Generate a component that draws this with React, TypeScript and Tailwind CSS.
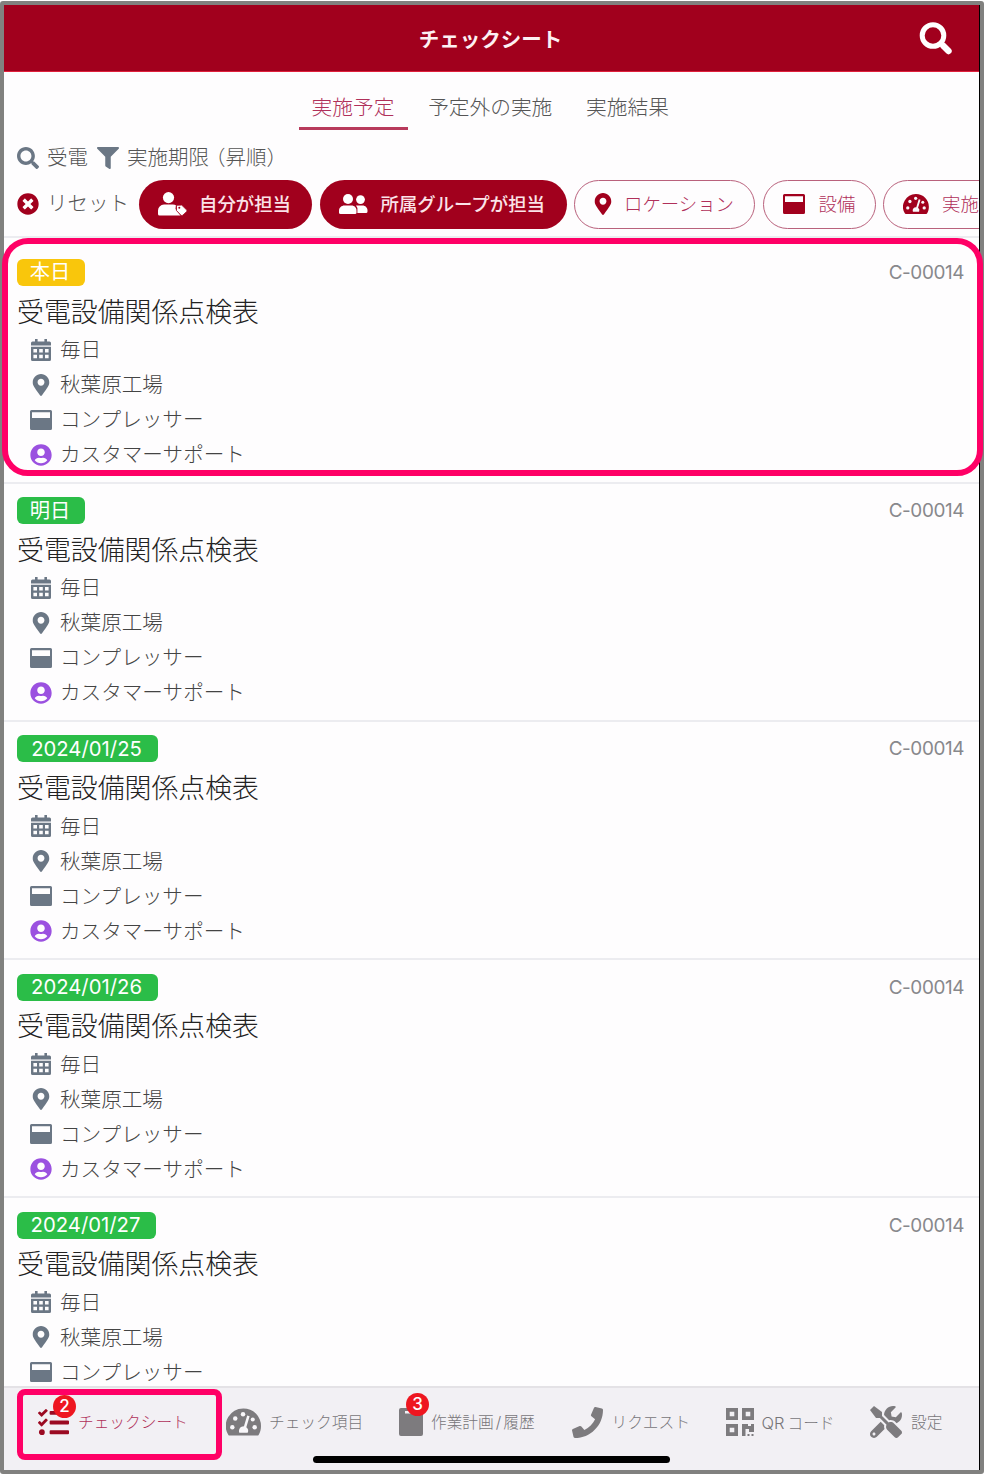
import type { ReactNode } from "react";
import {
  FaFilter,
  FaMapMarkerAlt,
  FaPhone,
  FaSearch,
  FaTasks,
  FaTimesCircle,
  FaTools,
  FaUserCircle,
} from "react-icons/fa";

const sheets = [
  { id: 1, due: "本日", badge: "w-[68px] bg-[#f9c60c]" },
  { id: 2, due: "明日", badge: "w-[68px] bg-[#2bbd48]" },
  { id: 3, due: "2024/01/25", badge: "w-[141px] bg-[#2bbd48]" },
  { id: 4, due: "2024/01/26", badge: "w-[141px] bg-[#2bbd48]" },
  { id: 5, due: "2024/01/27", badge: "w-[139px] bg-[#2bbd48]" },
];

function HeaderSearchIcon({ className }: { className: string }) {
  return (
    <svg viewBox="0 0 34 34" className={className} fill="none" stroke="currentColor">
      <circle cx="14" cy="13.5" r="10.8" strokeWidth="5" />
      <path d="M21 21l3 3" strokeWidth="4" />
      <path d="M24.5 24l5 5" strokeWidth="6.4" strokeLinecap="round" />
    </svg>
  );
}

function EquipmentIcon({ className }: { className: string }) {
  return (
    <svg viewBox="0 0 22 20" className={className} fill="currentColor">
      <path
        fillRule="evenodd"
        d="M1.5 0h19A1.5 1.5 0 0 1 22 1.5v17a1.5 1.5 0 0 1-1.5 1.5h-19A1.5 1.5 0 0 1 0 18.5v-17A1.5 1.5 0 0 1 1.5 0zM2 2.3v5.7h18v-5.7z"
      />
    </svg>
  );
}

function CalendarIcon() {
  return (
    <svg viewBox="0 0 20 22" className="h-[22px] w-[20px] text-[#6b7785]" fill="currentColor">
      <path d="M4 0h2.6v2.5h6.8V0H16v2.5h2.5A1.5 1.5 0 0 1 20 4v2.5H0V4a1.5 1.5 0 0 1 1.5-1.5H4z" />
      <path
        fillRule="evenodd"
        d="M0 7.8h20v12.7a1.5 1.5 0 0 1-1.5 1.5h-17A1.5 1.5 0 0 1 0 20.5zM2.4 10v3.5h3.6V10zm5.8 0v3.5h3.6V10zm5.8 0v3.5h3.6V10zM2.4 15.7v3.5h3.6v-3.5zm5.8 0v3.5h3.6v-3.5zm5.8 0v3.5h3.6v-3.5z"
      />
    </svg>
  );
}

function GaugeIcon({ className }: { className: string }) {
  return (
    <svg viewBox="0 0 36 28" className={className}>
      <path
        fill="currentColor"
        d="M18 0a18 18 0 0 1 18 18c0 3.4-.8 6.4-2.3 9.1-.3.6-.9.9-1.5.9H3.800c-.6 0-1.200-.3-1.500-.9A18 18 0 0 1 18 0z"
      />
      <g className="fill-[#f9f7fa]">
        <circle cx="6.5" cy="19.5" r="2.3" />
        <circle cx="9.5" cy="10.5" r="2.3" />
        <circle cx="17.5" cy="6" r="2.3" />
        <circle cx="29.5" cy="19.5" r="2.3" />
        <circle cx="27.5" cy="11.5" r="2.1" />
        <path d="M21.8 7.2l2.5.8-3.4 11.3a4.700 4.700 0 0 1 1.400 5.700h-8.600a4.700 4.700 0 0 1 4.700-6.500z" />
      </g>
    </svg>
  );
}

function UserTagIcon() {
  return (
    <svg viewBox="0 0 29 24" className="h-[24px] w-[29px] shrink-0 text-white" fill="currentColor">
      <circle cx="10.5" cy="5.6" r="5.6" />
      <path d="M6 12.5h9c1.2 0 2.1.3 2.9.8l-.4 3.700 5 6.500H1.500A1.500 1.500 0 0 1 0 22v-3a6.300 6.300 0 0 1 6-6.500z" />
      <path
        className="stroke-[#a1001d]"
        strokeWidth="0.8"
        d="M18.500 13.300l5.200-.2 4.800 4.700c.6.600.6 1.300 0 1.900l-3.700 3.500c-.6.500-1.300.5-1.900 0l-4.400-4.600z"
      />
      <circle cx="21.3" cy="15.8" r="1" className="fill-[#a1001d]" />
    </svg>
  );
}

function UserGroupIcon() {
  return (
    <svg viewBox="0 0 29 20" className="h-[20px] w-[29px] shrink-0 text-white" fill="currentColor">
      <circle cx="9" cy="5" r="5" />
      <circle cx="21.5" cy="5.6" r="4.4" />
      <path d="M5.5 11.500h7c3 0 5 2.300 5 5V18.500a1.500 1.500 0 0 1-1.500 1.500H1.500A1.500 1.500 0 0 1 0 18.500v-2c0-2.700 2.500-5 5.500-5z" />
      <path d="M17 11.500h6.500c2.900 0 5 2.200 5 4.800V17.500a1.500 1.500 0 0 1-1.500 1.500h-8.600v-3.200a6 6 0 0 0-1.400-4.300z" />
    </svg>
  );
}

function PlanIcon() {
  return (
    <svg viewBox="0 0 24 28" className="h-[28px] w-[24px]" fill="currentColor">
      <path fillRule="evenodd" d="M2 0h20a2 2 0 0 1 2 2v24a2 2 0 0 1-2 2H2a2 2 0 0 1-2-2V2a2 2 0 0 1 2-2zM6 3v2.5h12V3z" />
    </svg>
  );
}

function QrIcon() {
  return (
    <svg viewBox="0 0 28 28" className="h-[28px] w-[28px] text-[#7d7b7e]" fill="currentColor">
      <path
        fillRule="evenodd"
        d="M0 0h12v12H0zM3.700 3.700v4.600h4.600V3.700zM16 0h12v12H16zM19.700 3.700v4.600h4.600V3.700zM0 16h12v12H0zM3.700 19.700v4.600h4.600v-4.600z"
      />
      <path d="M16 16h6v2h3v-2h3v8h-5v-3h-3.500v7H16z" />
      <path d="M21.500 26h2v2h-2zM25.500 26h2v2h-2z" />
    </svg>
  );
}

function Chip({ className, children }: { className: string; children: ReactNode }) {
  return (
    <button className={`flex h-[49px] shrink-0 items-center rounded-full text-[18.4px] whitespace-nowrap ${className}`}>
      {children}
    </button>
  );
}

function Detail({ icon, children }: { icon: ReactNode; children: ReactNode }) {
  return (
    <li className="flex h-[35px] items-center">
      <span className="flex w-[22px] justify-center">{icon}</span>
      <span className="ml-[8.5px] pt-[2px] text-[20.6px] leading-none text-[#444]">{children}</span>
    </li>
  );
}

function SheetItem({ due, badge }: { due: string; badge: string }) {
  return (
    <article className="h-[238.2px] pt-[13.5px] pl-[13px]">
      <div className="flex h-[27px] items-center justify-between pr-[15px]">
        <span
          className={`flex h-[27px] items-center justify-center rounded-[6px] pr-[2px] text-[20.3px] leading-none text-white ${badge}`}
        >
          {due}
        </span>
        <span className="pt-[2px] text-[18.9px] leading-none tracking-[-0.4px] text-[#88888c]">C-00014</span>
      </div>
      <h2 className="h-[46px] pt-[11.5px] text-[26.9px] leading-[28px] font-light text-[#222]">受電設備関係点検表</h2>
      <ul className="pl-[12.5px] font-light">
        <Detail icon={<CalendarIcon />}>毎日</Detail>
        <Detail icon={<FaMapMarkerAlt size={22} color="#6b7785" />}>秋葉原工場</Detail>
        <Detail icon={<EquipmentIcon className="h-[20px] w-[22px] text-[#6b7785]" />}>コンプレッサー</Detail>
        <Detail icon={<FaUserCircle size={22} color="#9b51e0" />}>カスタマーサポート</Detail>
      </ul>
    </article>
  );
}

function NavItem({
  className,
  iconBox,
  icon,
  label,
}: {
  className: string;
  iconBox: string;
  icon: ReactNode;
  label: ReactNode;
}) {
  return (
    <a className={`flex shrink-0 items-center ${className}`}>
      <span className={`relative shrink-0 ${iconBox}`}>{icon}</span>
      <span className="pt-[2px] text-[15.7px] leading-none whitespace-nowrap">{label}</span>
    </a>
  );
}

function Count({ className, children }: { className: string; children: ReactNode }) {
  return (
    <span
      className={`absolute flex h-[23px] w-[23px] items-center justify-center rounded-full bg-[#ee1620] text-[17px] leading-none font-medium text-white ${className}`}
    >
      {children}
    </span>
  );
}

export default function App() {
  return (
    <div className="relative h-[1475px] w-[984px] overflow-hidden bg-white pt-px font-['Inter','Noto_Sans_CJK_JP',sans-serif]">
      <div className="flex h-[1473px] flex-col overflow-hidden rounded-[3px] border-4 border-[#81817f] bg-[#fefdfe]">
        <div className="flex min-h-0 flex-1 flex-col overflow-hidden border-r border-black">
          <header className="relative flex h-[67px] shrink-0 items-center justify-center border-b border-[#e0203c] bg-[#a1001d]">
            <h1 className="pt-[4px] pr-[2px] text-[20.5px] font-bold text-[#fdf0f3]">チェックシート</h1>
            <HeaderSearchIcon className="absolute top-[17px] right-[26px] h-[34px] w-[34px] text-white" />
          </header>

          <div className="h-[166px] shrink-0 border-b-2 border-[#ececf0]">
            <nav className="flex h-[57.5px] pl-[294.5px] text-[20.7px] leading-none font-light text-[#555]">
              <a className="flex h-[57.5px] w-[109px] items-center justify-center border-b-[3px] border-[#b83a5c] pt-[18px] text-[#b0305a]">
                実施予定
              </a>
              <a className="flex w-[165.5px] items-center justify-center pt-[15px]">予定外の実施</a>
              <a className="flex w-[109px] items-center justify-center pt-[15px]">実施結果</a>
            </nav>

            <div className="flex h-[56px] items-center pl-[13px] text-[20.5px] leading-none font-light text-[#555]">
              <FaSearch size={22} color="#6b7785" />
              <span className="ml-[8px] pt-[2px]">受電</span>
              <FaFilter className="ml-[9px]" size={22} color="#6b7785" />
              <span className="ml-[8px] pt-[2px]">
                実施期限<span className="-ml-[4px]">（昇順）</span>
              </span>
            </div>

            <div className="-mt-[6px] flex h-[49px] items-center overflow-hidden pl-[13px]">
              <FaTimesCircle className="shrink-0" size={22} color="#a1001d" />
              <span className="ml-[8px] w-[91.5px] shrink-0 pt-px text-[20.5px] leading-none font-light whitespace-nowrap text-[#555]">
                リセット
              </span>
              <Chip className="w-[173px] bg-[#a1001d] pl-[19px] font-medium text-[#fbe3e8]">
                <UserTagIcon />
                <span className="ml-[12.5px] pt-px">自分が担当</span>
              </Chip>
              <Chip className="ml-[8px] w-[247px] bg-[#a1001d] pl-[19px] font-medium text-[#fbe3e8]">
                <UserGroupIcon />
                <span className="ml-[13px] pt-px">所属グループが担当</span>
              </Chip>
              <Chip className="ml-[7.5px] w-[181px] border-[1.5px] border-[#b9617c] pl-[17px] text-[#b0305a]">
                <FaMapMarkerAlt size={22} color="#a1001d" />
                <span className="ml-[10px] pt-px font-light">ロケーション</span>
              </Chip>
              <Chip className="ml-[7.5px] w-[113px] border-[1.5px] border-[#b9617c] pl-[19px] text-[#b0305a]">
                <EquipmentIcon className="h-[20px] w-[22px] text-[#a1001d]" />
                <span className="ml-[14px] pt-px font-light">設備</span>
              </Chip>
              <Chip className="ml-[7.5px] w-[150px] border-[1.5px] border-[#b9617c] pl-[19px] text-[#b0305a]">
                <GaugeIcon className="h-[20px] w-[26px] shrink-0 text-[#a1001d]" />
                <span className="ml-[13px] pt-px font-light">実施結果</span>
              </Chip>
            </div>
          </div>

          <main className="min-h-0 flex-1 overflow-hidden pt-[7.5px]">
            <div className="divide-y-2 divide-[#ececf0]">
              {sheets.map((s) => (
                <SheetItem key={s.id} due={s.due} badge={s.badge} />
              ))}
            </div>
          </main>

          <footer className="h-[84px] shrink-0 border-t-2 border-[#e4e2e6] bg-[#f2f0f4]">
            <nav className="flex h-[68px] items-center pl-[34px] font-light text-[#777579]">
              <NavItem
                className="w-[188px] text-[#b0305a]"
                iconBox="w-[40px]"
                label="チェックシート"
                icon={
                  <>
                    <FaTasks size={31} color="#9b0a22" />
                    <Count className="-top-[12px] left-[15px]">2</Count>
                  </>
                }
              />
              <NavItem
                className="w-[173px]"
                iconBox="w-[43px]"
                label="チェック項目"
                icon={<GaugeIcon className="h-[28px] w-[35px] text-[#7d7b7e]" />}
              />
              <NavItem
                className="w-[173px]"
                iconBox="w-[32px] text-[#7d7b7e]"
                label={
                  <>
                    作業計画<span className="px-[2px]">/</span>履歴
                  </>
                }
                icon={
                  <>
                    <PlanIcon />
                    <Count className="-top-[15px] left-[7px]">3</Count>
                  </>
                }
              />
              <NavItem className="w-[153.5px]" iconBox="w-[39.5px]" label="リクエスト" icon={<FaPhone size={31} color="#7d7b7e" />} />
              <NavItem
                className="w-[144.5px]"
                iconBox="w-[36px]"
                label={
                  <>
                    <span className="mr-[3px] text-[16.5px]">QR</span>コード
                  </>
                }
                icon={<QrIcon />}
              />
              <NavItem className="w-[90px]" iconBox="w-[41px]" label="設定" icon={<FaTools size={32} color="#7d7b7e" />} />
            </nav>
            <div className="mx-auto h-[7px] w-[357px] rounded-full bg-black" />
          </footer>
        </div>
      </div>

      {/* highlight frames over the first sheet and the active tab */}
      <div className="absolute top-[238px] left-[2px] h-[238px] w-[981px] rounded-[26px] border-[6px] border-[#ff0066]" />
      <div className="absolute top-[1389px] left-[17px] h-[71px] w-[205px] rounded-[8px] border-[6px] border-[#ff0066]" />
    </div>
  );
}
